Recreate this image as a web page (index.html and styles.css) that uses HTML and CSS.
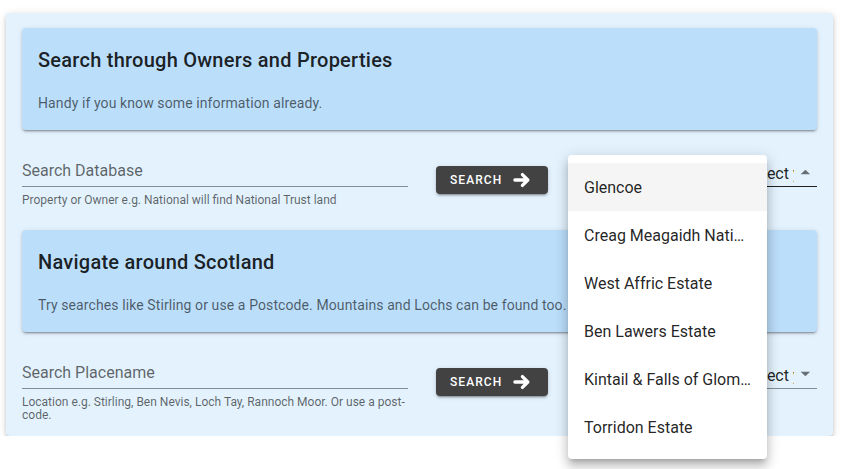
FILE: index.html
```html
<!DOCTYPE html>
<html lang="en">
<head>
  <meta charset="UTF-8">
  <title>Search</title>
  <link rel="stylesheet" href="styles.css">
</head>
<body>

<div class="page">
  <div class="card">

    <div class="banner">
      <div class="banner-title">Search through Owners and Properties</div>
      <div class="banner-text">Handy if you know some information already.</div>
    </div>

    <div class="search-row">
      <div class="field">
        <div class="field-input">Search Database</div>
        <div class="field-hint">Property or Owner e.g. National will find National Trust land</div>
      </div>
      <button class="btn">SEARCH
        <svg width="20" height="20" viewBox="0 0 24 24"><path d="M3.5 12H19M12.5 5.5L19 12l-6.5 6.5" fill="none" stroke="#fff" stroke-width="4" stroke-linecap="round" stroke-linejoin="round"/></svg>
      </button>
      <div class="select select-active">
        <div class="select-text">Select your property</div>
        <svg width="24" height="24" viewBox="0 0 24 24"><path d="M7 14.5l5-5 5 5z" fill="rgba(0,0,0,0.54)"/></svg>
      </div>
    </div>

    <div class="banner banner-second">
      <div class="banner-title">Navigate around Scotland</div>
      <div class="banner-text">Try searches like Stirling or use a Postcode. Mountains and Lochs can be found too.</div>
    </div>

    <div class="search-row">
      <div class="field">
        <div class="field-input">Search Placename</div>
        <div class="field-hint">Location e.g. Stirling, Ben Nevis, Loch Tay, Rannoch Moor. Or use a post-code.</div>
      </div>
      <button class="btn">SEARCH
        <svg width="20" height="20" viewBox="0 0 24 24"><path d="M3.5 12H19M12.5 5.5L19 12l-6.5 6.5" fill="none" stroke="#fff" stroke-width="4" stroke-linecap="round" stroke-linejoin="round"/></svg>
      </button>
      <div class="select">
        <div class="select-text">Select your place</div>
        <svg width="24" height="24" viewBox="0 0 24 24"><path d="M7 9.5l5 5 5-5z" fill="rgba(0,0,0,0.54)"/></svg>
      </div>
    </div>

  </div>
</div>

<div class="menu">
  <div class="menu-item menu-item-hover">Glencoe</div>
  <div class="menu-item">Creag Meagaidh National Nature Reserve</div>
  <div class="menu-item">West Affric Estate</div>
  <div class="menu-item">Ben Lawers Estate</div>
  <div class="menu-item">Kintail &amp; Falls of Glomach</div>
  <div class="menu-item">Torridon Estate</div>
</div>

</body>
</html>
```

FILE: styles.css
```css
body {
  margin: 0;
  background-color: #ffffff;
  font-family: Roboto, "Liberation Sans", sans-serif;
  color: rgba(0, 0, 0, 0.87);
}

.page {
  padding: 13px 9px 0 6px;
}

.card {
  background-color: #e3f2fd;
  border-radius: 4px;
  padding: 15px 16px 14px;
  box-shadow: 0 3px 3px -2px rgba(0,0,0,.2), 0 3px 4px 0 rgba(0,0,0,.14), 0 1px 8px 0 rgba(0,0,0,.12);
}

.banner {
  background-color: #bbdefb;
  border-radius: 4px;
  box-shadow: 0 3px 1px -2px rgba(0,0,0,.2), 0 2px 2px 0 rgba(0,0,0,.14), 0 1px 5px 0 rgba(0,0,0,.12);
}

.banner-second {
  margin-top: 23px;
}

.banner-title {
  padding: 16px;
  font-size: 20px;
  font-weight: 500;
  line-height: 32px;
  letter-spacing: 0.0125em;
}

.banner-text {
  padding: 0 16px 16px;
  font-size: 14px;
  line-height: 22px;
  color: rgba(0, 0, 0, 0.6);
  letter-spacing: 0.0071em;
}

.search-row {
  display: flex;
  align-items: flex-start;
  margin-top: 30px;
}

.field {
  width: 386px;
}

.field-input {
  font-size: 16px;
  line-height: 20px;
  padding: 1px 0 5px;
  color: rgba(0, 0, 0, 0.6);
  border-bottom: 1px solid rgba(0, 0, 0, 0.42);
}

.field-hint {
  margin-top: 7px;
  font-size: 12px;
  line-height: 13px;
  color: rgba(0, 0, 0, 0.6);
}

.btn {
  margin: 6px 0 0 28px;
  width: 112px;
  height: 28px;
  padding: 0 0 0 14px;
  display: flex;
  align-items: center;
  gap: 10px;
  background-color: #424242;
  color: #ffffff;
  border: none;
  border-radius: 4px;
  font-family: Roboto, "Liberation Sans", sans-serif;
  font-size: 12px;
  font-weight: 500;
  letter-spacing: 0.09em;
  box-shadow: 0 3px 1px -2px rgba(0,0,0,.2), 0 2px 2px 0 rgba(0,0,0,.14), 0 1px 5px 0 rgba(0,0,0,.12);
}

.select {
  margin-left: auto;
  width: 72px;
  display: flex;
  align-items: center;
  height: 26px;
  border-bottom: 1px solid rgba(0, 0, 0, 0.42);
  margin-top: -3px;
  padding-top: 3px;
}

.select-active {
  border-bottom: 1px solid rgba(0, 0, 0, 0.87);
}

.select-text {
  width: 52px;
  overflow: hidden;
  white-space: nowrap;
  font-size: 16px;
  line-height: 20px;
  padding-top: 1px;
}

.select svg {
  margin-left: auto;
  margin-top: -3px;
}

.menu {
  position: absolute;
  left: 568px;
  top: 155px;
  width: 199px;
  padding: 8px 0;
  background-color: #ffffff;
  border-radius: 4px;
  box-shadow: 0 5px 5px -3px rgba(0,0,0,.2), 0 8px 10px 1px rgba(0,0,0,.14), 0 3px 14px 2px rgba(0,0,0,.12);
}

.menu-item {
  height: 48px;
  box-sizing: border-box;
  padding: 2px 16px 0;
  line-height: 46px;
  font-size: 16px;
  white-space: nowrap;
  overflow: hidden;
  text-overflow: ellipsis;
}

.menu-item-hover {
  background-color: #f5f5f5;
}
```
